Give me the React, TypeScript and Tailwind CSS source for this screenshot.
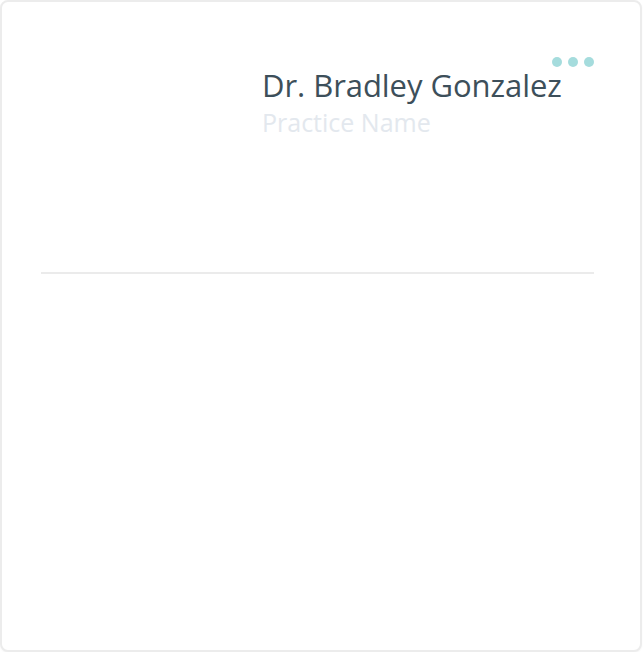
const ProviderCard = () => {
  return (
    <div className="relative h-[652px] w-[642px] rounded-lg border-2 border-[#ececec] bg-white shadow-[0_1px_2px_rgba(0,0,0,0.04)]">
      {/* Menu */}
      <button className="absolute right-[46px] top-[55px] flex gap-[6px]" aria-label="More">
        <span className="h-[10px] w-[10px] rounded-full bg-[#a5dcdd]" />
        <span className="h-[10px] w-[10px] rounded-full bg-[#a5dcdd]" />
        <span className="h-[10px] w-[10px] rounded-full bg-[#a5dcdd]" />
      </button>

      {/* Header */}
      <div className="flex h-[270px] pl-[260px] pt-[63px]">
        <div>
          <h1 className="text-[31px] leading-[40px] tracking-[-0.05px] text-[#3d4f5a]">Dr. Bradley Gonzalez</h1>
          <p className="text-[25px] leading-[34px] text-[#e3e8ee]">Practice Name</p>
        </div>
      </div>

      <div className="ml-[39px] mr-[46px] h-[2px] bg-[#ebebeb]" />
    </div>
  );
};

export default function App() {
  return (
    <div className="font-['Open_Sans',sans-serif]">
      <ProviderCard />
    </div>
  );
}
